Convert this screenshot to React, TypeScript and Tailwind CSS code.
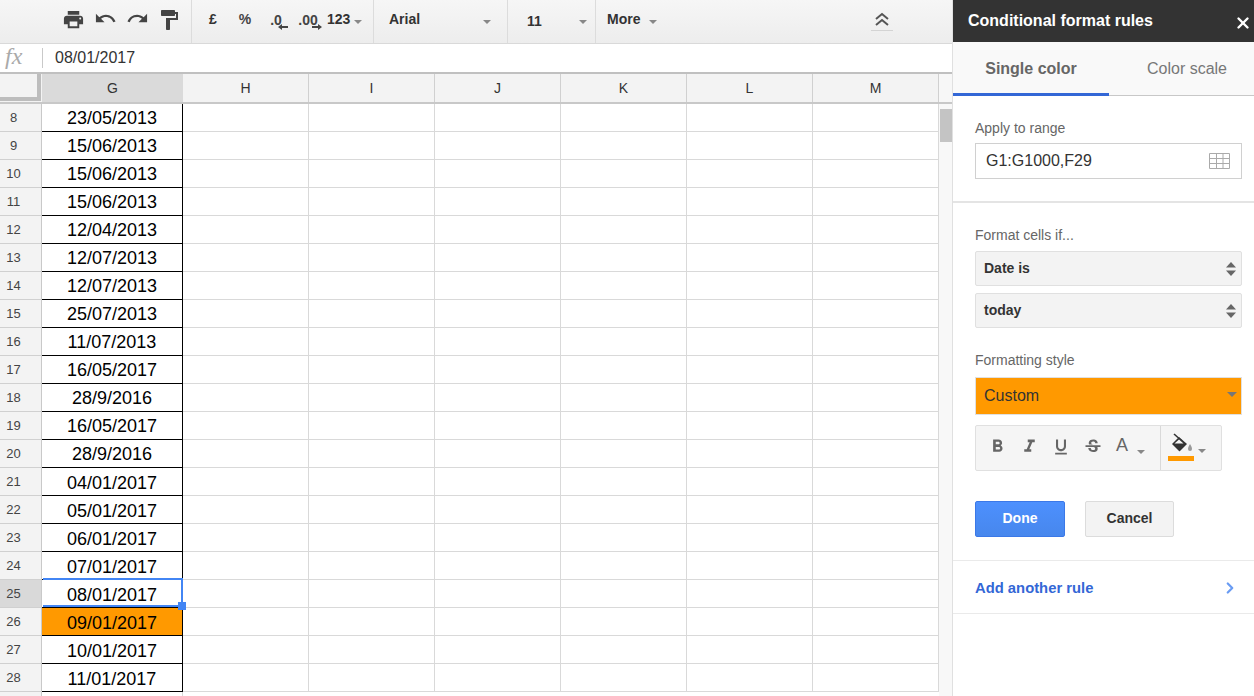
import React from "react";
import {
  MdPrint,
  MdUndo,
  MdRedo,
  MdFormatPaint,
  MdFormatBold,
  MdFormatItalic,
  MdFormatUnderlined,
  MdStrikethroughS,
} from "react-icons/md";
import { ChevronRight, X } from "lucide-react";

const rows: [number, string][] = [
  [8, "23/05/2013"],
  [9, "15/06/2013"],
  [10, "15/06/2013"],
  [11, "15/06/2013"],
  [12, "12/04/2013"],
  [13, "12/07/2013"],
  [14, "12/07/2013"],
  [15, "25/07/2013"],
  [16, "11/07/2013"],
  [17, "16/05/2017"],
  [18, "28/9/2016"],
  [19, "16/05/2017"],
  [20, "28/9/2016"],
  [21, "04/01/2017"],
  [22, "05/01/2017"],
  [23, "06/01/2017"],
  [24, "07/01/2017"],
  [25, "08/01/2017"],
  [26, "09/01/2017"],
  [27, "10/01/2017"],
  [28, "11/01/2017"],
];

const emptyCols = ["H", "I", "J", "K", "L", "M"];

const Caret = () => (
  <span className="inline-block w-0 h-0 border-x-[4px] border-x-transparent border-t-[4px] border-t-[#888]" />
);

const ToolButton = ({ children }: { children: React.ReactNode }) => (
  <div className="w-8 h-full flex items-center justify-center text-[#444]">{children}</div>
);

const DecimalIcon = ({ label, dir }: { label: string; dir: "left" | "right" }) => (
  <div className="relative w-8 h-full text-[#444] font-bold text-[14px]">
    <span className="absolute -left-px w-full text-center top-[10px]">{label}</span>
    <svg className="absolute left-[10px] top-[23px]" width="24" height="8" viewBox="0 0 24 8" fill="#444">
      {dir === "left" ? (
        <path d="M7 4 L11 1 V3 H17 V5 H11 V7 Z" />
      ) : (
        <path d="M9 3 H15 V1 L19 4 L15 7 V5 H9 Z" />
      )}
    </svg>
  </div>
);

const Toolbar = () => (
  <div className="h-11 shrink-0 flex border-b border-[#d9d9d9] bg-gradient-to-b from-[#f6f6f6] to-[#ededed] font-['Liberation_Sans',sans-serif]">
    <div className="w-[192px] h-full pl-[57px] flex border-r border-[#dcdcdc]">
      <ToolButton><MdPrint size={23} className="-mt-1" /></ToolButton>
      <ToolButton><MdUndo size={23} className="-mt-[6px]" /></ToolButton>
      <ToolButton><MdRedo size={23} className="-mt-[6px]" /></ToolButton>
      <ToolButton><MdFormatPaint size={24} className="-mt-1" /></ToolButton>
    </div>
    <div className="w-[182px] h-full pl-[5px] flex items-center border-r border-[#dcdcdc]">
      <div className="w-8 text-center font-bold text-[14px] text-[#333] -mt-1">£</div>
      <div className="w-8 text-center font-bold text-[14px] text-[#444] -mt-1">%</div>
      <DecimalIcon label=".0" dir="left" />
      <DecimalIcon label=".00" dir="right" />
      <div className="ml-[2px] font-bold text-[14px] text-[#333] -mt-1">123</div>
      <span className="ml-[4px] flex"><Caret /></span>
    </div>
    <div className="w-[134px] h-full pl-[15px] flex items-center border-r border-[#dcdcdc]">
      <span className="font-bold text-[14px] text-[#333] -mt-1">Arial</span>
      <span className="ml-[63px] flex"><Caret /></span>
    </div>
    <div className="w-[88px] h-full pl-[19px] flex items-center border-r border-[#dcdcdc]">
      <span className="font-bold text-[14px] text-[#333]">11</span>
      <span className="ml-[37px] flex"><Caret /></span>
    </div>
    <div className="flex-1 h-full pl-[11px] flex items-center">
      <span className="font-bold text-[14px] text-[#333] -mt-1">More</span>
      <span className="ml-[9px] flex"><Caret /></span>
      <div className="ml-[214px] w-[22px] shrink-0 h-[31px] flex items-start justify-center border-b border-[#d4d4d4] -mt-[13px]">
        <svg className="mt-[12px]" width="16" height="15" viewBox="0 0 16 15" fill="none" stroke="#555" strokeWidth="2">
          <path d="M2 7 L8 2 L14 7" />
          <path d="M2 13 L8 8 L14 13" />
        </svg>
      </div>
    </div>
  </div>
);

const FormulaBar = () => (
  <div className="h-[30px] shrink-0 flex items-center bg-white border-b-2 border-[#c0c0c0]">
    <span className="w-[42px] pl-[5px] font-['Liberation_Serif',serif] italic text-[24px] leading-none text-[#aaa] -mt-1">
      fx
    </span>
    <span className="w-px h-[20px] bg-[#c9c9c9]" />
    <span className="ml-[12px] text-[16px] text-[#333] font-['Liberation_Sans',sans-serif]">08/01/2017</span>
  </div>
);

const HeaderRow = () => (
  <div className="h-[30px] shrink-0 flex border-b-2 border-[#c8c8c8] font-['Liberation_Sans',sans-serif] text-[14px] text-[#333]">
    <div className="w-[42px] bg-[#f3f3f3]">
      <div className="w-[37px] h-[23px] bg-[#f3f3f3] border-r-[4px] border-b-[4px] border-[#bdbdbd] box-content" />
    </div>
    <div className="w-[141px] bg-[#dadada] flex items-center justify-center">G</div>
    {emptyCols.map((c) => (
      <div key={c} className="w-[126px] bg-[#f3f3f3] border-r border-[#d0d0d0] flex items-center justify-center">
        {c}
      </div>
    ))}
    <div className="flex-1 bg-[#f7f7f7]" />
  </div>
);

const SheetRow = ({ num, value }: { num: number; value: string }) => {
  const selected = num === 25;
  const orange = num === 26;
  return (
    <div className="h-7 shrink-0 flex font-['Liberation_Sans',sans-serif]">
      <div
        className={`w-[42px] border-b border-b-[#d0d0d0] border-r border-r-[#c9c9c9] flex items-center justify-center pr-[14px] text-[13px] text-[#444] ${
          selected ? "bg-[#d9d9d9]" : "bg-[#f3f3f3]"
        }`}
      >
        {num}
      </div>
      <div
        className={`relative w-[141px] border-r border-b border-black flex items-center justify-center text-[18px] leading-none text-black ${
          orange ? "bg-[#ff9900]" : "bg-white"
        } ${num >= 21 ? "pt-[2px]" : ""}`}
      >
        {value}
        {selected && (
          <>
            <div className="absolute -top-[2px] left-[1px] right-[-1px] bottom-0 border-2 border-l-0 border-[#4285f4] pointer-events-none" />
            <div className="absolute right-[-4px] bottom-[-3px] w-[8px] h-[8px] bg-[#4285f4] z-10" />
          </>
        )}
      </div>
      {emptyCols.map((c) => (
        <div key={c} className="w-[126px] bg-white border-b border-r border-[#d9d9d9]" />
      ))}
    </div>
  );
};

const Stepper = () => (
  <svg width="10" height="14" viewBox="0 0 10 14" fill="#666">
    <path d="M5 0 L10 5.5 H0 Z" />
    <path d="M0 8.5 H10 L5 14 Z" />
  </svg>
);

const SelectBox = ({ label }: { label: string }) => (
  <div className="h-[35px] flex items-center justify-between pl-[8px] pr-[5px] bg-[#f3f3f3] border border-[#e0e0e0] rounded-[2px]">
    <span className="font-bold text-[14px] text-[#333]">{label}</span>
    <Stepper />
  </div>
);

const FillColorIcon = () => (
  <svg className="absolute left-[9px] top-[7px]" width="24" height="20" viewBox="0 0 24 20">
    <path d="M4 1 L12 8" stroke="#333" strokeWidth="1.6" fill="none" />
    <path d="M9 4 L17 11 L10 18 Q9.5 18.5 9 18 L2 11 Z" fill="#333" />
    <path d="M9 6.5 L13.5 10.5 H4.5 Z" fill="#f5f5f5" />
    <path d="M20 11 C21 13 22 14 22 16 A2 2 0 0 1 18 16 C18 14 19 13 20 11" fill="#999" />
  </svg>
);

const Panel = () => (
  <div className="w-[302px] shrink-0 h-full flex flex-col bg-white border-l border-[#e0e0e0] font-['Liberation_Sans',sans-serif]">
    <div className="h-[42px] shrink-0 flex items-center justify-between bg-[#333] pl-[15px] pr-[2px]">
      <span className="font-bold text-[16px] text-white">Conditional format rules</span>
      <X size={18} strokeWidth={3.2} className="text-white mt-[3px]" />
    </div>
    <div className="h-[54px] shrink-0 flex bg-[#f9f9f9] border-b border-[#c8c8c8]">
      <div className="w-[156px] h-[54px] flex items-center justify-center border-b-[3px] border-[#3367d6] font-bold text-[16px] text-[#666] pt-[2px]">
        Single color
      </div>
      <div className="flex-1 flex items-center justify-center text-[16px] text-[#777] pl-[11px] pt-[1px]">Color scale</div>
    </div>
    <div className="h-[107px] shrink-0 pt-[24px] pl-[22px] pr-[12px] border-b-2 border-[#e4e4e4]">
      <div className="text-[14px] leading-4 text-[#666]">Apply to range</div>
      <div className="mt-[7px] h-[36px] flex items-center justify-between pl-[10px] pr-[11px] border border-[#d0d0d0] text-[16px] text-[#333]">
        G1:G1000,F29
        <svg width="21" height="16" viewBox="0 0 21 16" fill="none" stroke="#aaa" strokeWidth="1">
          <path d="M0.5 0.5 H20.5 V15.5 H0.5 Z M0.5 5.5 H20.5 M0.5 10.5 H20.5 M7.5 0.5 V15.5 M14 0.5 V15.5" />
        </svg>
      </div>
    </div>
    <div className="pt-[24px] pl-[22px] pr-[12px]">
      <div className="text-[14px] leading-4 text-[#666]">Format cells if...</div>
      <div className="mt-[8px] flex flex-col gap-[7px]">
        <SelectBox label="Date is" />
        <SelectBox label="today" />
      </div>
      <div className="mt-[24px] text-[14px] leading-4 text-[#666]">Formatting style</div>
      <div className="mt-[9px] h-[38px] flex items-center justify-between pl-[8px] pr-[4px] bg-[#ff9900] border border-[#e0e0e0] text-[16px] text-[#333]">
        Custom
        <span className="inline-block w-0 h-0 -mt-1 border-x-[5px] border-x-transparent border-t-[5px] border-t-[#777]" />
      </div>
      <div className="mt-[10px] w-[247px] h-[46px] flex bg-[#f5f5f5] border border-[#e0e0e0] rounded-[2px] text-[#666]">
        <div className="w-[185px] flex items-center pl-[5px] border-r border-[#d9d9d9]">
          <span className="w-8 flex justify-center -mt-[3px]"><MdFormatBold size={21} /></span>
          <span className="w-8 flex justify-center -mt-[3px]"><MdFormatItalic size={21} /></span>
          <span className="w-8 flex justify-center -mt-[3px]"><MdFormatUnderlined size={20} /></span>
          <span className="w-8 flex justify-center -mt-[3px]"><MdStrikethroughS size={20} /></span>
          <span className="w-[26px] text-center text-[18px] -mt-[6px]">A</span>
          <span className="ml-[2px] flex mt-[7px]"><Caret /></span>
        </div>
        <div className="relative flex-1">
          <FillColorIcon />
          <div className="absolute left-[7px] top-[30px] w-[26px] h-[5px] bg-[#ff9900]" />
          <span className="absolute left-[37px] top-[23px] flex"><Caret /></span>
        </div>
      </div>
      <div className="mt-[30px] flex gap-[20px]">
        <div className="w-[90px] h-[36px] flex items-center justify-center pb-px rounded-[2px] border border-[#3b78e7] bg-gradient-to-b from-[#4d90fe] to-[#4787ed] font-bold text-[14px] text-white">
          Done
        </div>
        <div className="w-[89px] h-[36px] flex items-center justify-center pb-px rounded-[2px] border border-[#dcdcdc] bg-[#f3f3f3] font-bold text-[14px] text-[#333]">
          Cancel
        </div>
      </div>
    </div>
    <div className="mt-[23px] h-[54px] flex items-center justify-between pl-[22px] pr-[15px] pt-[2px] border-y border-[#eaeaea]">
      <span className="font-bold text-[14.8px] text-[#3367d6]">Add another rule</span>
      <ChevronRight size={18} strokeWidth={3} className="text-[#6a9cf3]" />
    </div>
  </div>
);

const App: React.FC = () => {
  return (
    <div className="w-[1254px] h-[696px] flex overflow-hidden bg-white">
      <div className="w-[952px] shrink-0 h-full flex flex-col overflow-hidden">
        <Toolbar />
        <FormulaBar />
        <HeaderRow />
        <div className="flex-1 flex min-h-0 overflow-hidden">
          <div className="w-[939px] shrink-0 flex flex-col">
            {rows.map(([num, value]) => (
              <SheetRow key={num} num={num} value={value} />
            ))}
            <div className="h-7 shrink-0 flex">
              <div className="w-[42px] bg-[#f3f3f3] border-r border-[#c9c9c9]" />
              <div className="w-[141px] border-r border-[#d9d9d9]" />
            </div>
          </div>
          <div className="flex-1 bg-[#f8f8f8] pt-[5px] pl-[1px]">
            <div className="h-[33px] bg-[#c4c4c4]" />
          </div>
        </div>
      </div>
      <Panel />
    </div>
  );
};

export default App;
